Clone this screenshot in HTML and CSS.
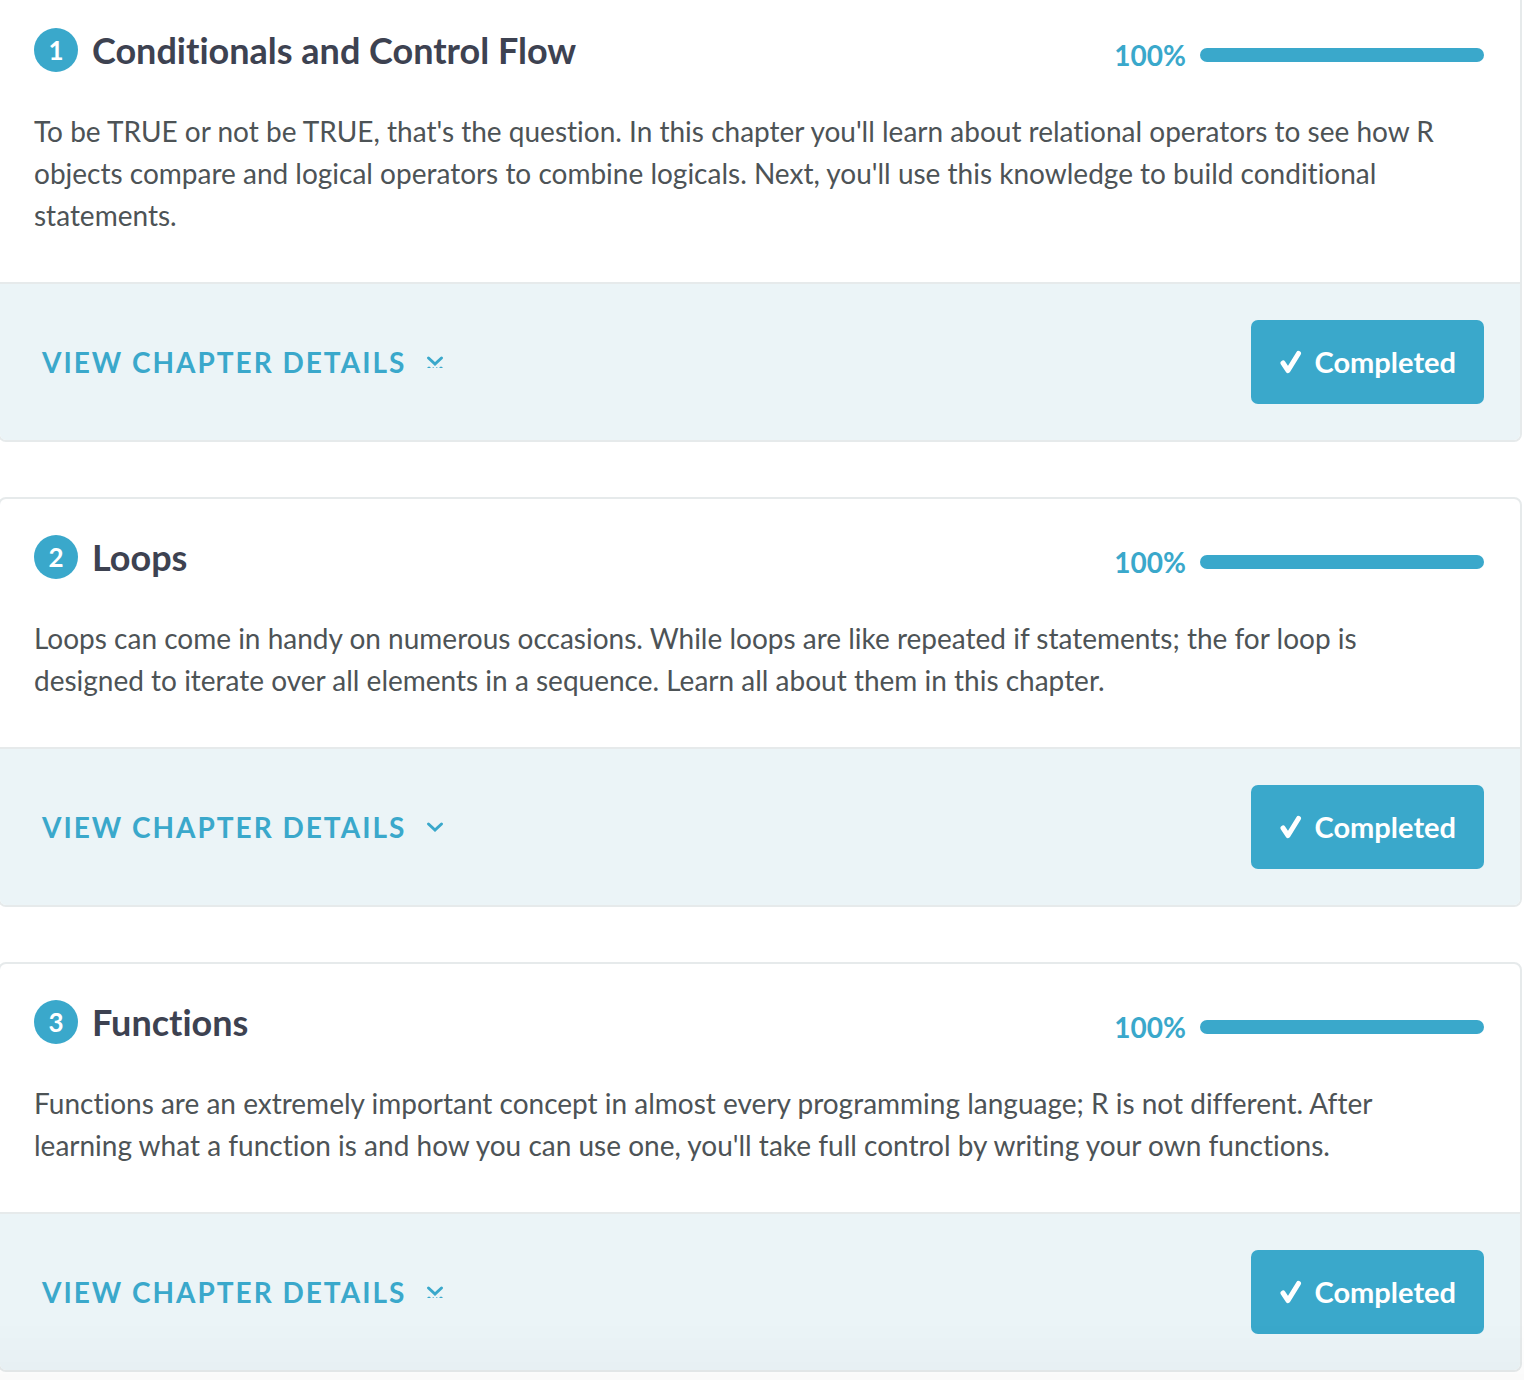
FILE: index.html
```html
<!DOCTYPE html>
<html lang="en">
<head>
  <meta charset="utf-8">
  <meta name="viewport" content="width=device-width, initial-scale=1">
  <title>Course chapters</title>
  <link rel="stylesheet" href="styles.css">
</head>
<body>
  <main class="chapters">
    <section class="chapter">
      <div class="chapter-body">
        <header class="chapter-header">
          <span class="chapter-number">1</span>
          <h2 class="chapter-title">Conditionals and Control Flow</h2>
          <div class="chapter-progress">
            <label class="progress-label" for="progress-1">100%</label>
            <progress class="progress-bar" id="progress-1" value="100" max="100"></progress>
          </div>
        </header>
        <p class="chapter-text">To be TRUE or not be TRUE, that's the question. In this chapter you'll learn about relational operators to see how R objects compare and logical operators to combine logicals. Next, you'll use this knowledge to build conditional statements.</p>
      </div>
      <footer class="chapter-footer">
        <button class="details-toggle" type="button">VIEW CHAPTER DETAILS
          <svg class="chevron" viewBox="0 0 18 14" aria-hidden="true"><path class="chevron-line" d="M2.500 3 9 9l6.500-6"/><path class="chevron-dots" d="M1 13q2-3 4 0zM6.500 13q.5-2 1.500 0zM10 13q1-2 1.500 0zM13 13q2-3 4 0z"/></svg>
        </button>
        <button class="completed" type="button">
          <svg class="check" viewBox="-1 0 24 24" aria-hidden="true"><path d="M3 13 8 20.500 18.500 3.500"/></svg>
          Completed
        </button>
      </footer>
    </section>

    <section class="chapter">
      <div class="chapter-body">
        <header class="chapter-header">
          <span class="chapter-number">2</span>
          <h2 class="chapter-title">Loops</h2>
          <div class="chapter-progress">
            <label class="progress-label" for="progress-2">100%</label>
            <progress class="progress-bar" id="progress-2" value="100" max="100"></progress>
          </div>
        </header>
        <p class="chapter-text">Loops can come in handy on numerous occasions. While loops are like repeated if statements; the for loop is designed to iterate over all elements in a sequence. Learn all about them in this chapter.</p>
      </div>
      <footer class="chapter-footer">
        <button class="details-toggle" type="button">VIEW CHAPTER DETAILS
          <svg class="chevron" viewBox="0 0 18 14" aria-hidden="true"><path class="chevron-line" d="M2.500 4 9 10l6.500-6"/></svg>
        </button>
        <button class="completed" type="button">
          <svg class="check" viewBox="-1 0 24 24" aria-hidden="true"><path d="M3 13 8 20.500 18.500 3.500"/></svg>
          Completed
        </button>
      </footer>
    </section>

    <section class="chapter">
      <div class="chapter-body">
        <header class="chapter-header">
          <span class="chapter-number">3</span>
          <h2 class="chapter-title">Functions</h2>
          <div class="chapter-progress">
            <label class="progress-label" for="progress-3">100%</label>
            <progress class="progress-bar" id="progress-3" value="100" max="100"></progress>
          </div>
        </header>
        <p class="chapter-text">Functions are an extremely important concept in almost every programming language; R is not different. After learning what a function is and how you can use one, you'll take full control by writing your own functions.</p>
      </div>
      <footer class="chapter-footer">
        <button class="details-toggle" type="button">VIEW CHAPTER DETAILS
          <svg class="chevron" viewBox="0 0 18 14" aria-hidden="true"><path class="chevron-line" d="M2.500 3 9 9l6.500-6"/><path class="chevron-dots" d="M1 13q2-3 4 0zM6.500 13q.5-2 1.500 0zM10 13q1-2 1.500 0zM13 13q2-3 4 0z"/></svg>
        </button>
        <button class="completed" type="button">
          <svg class="check" viewBox="-1 0 24 24" aria-hidden="true"><path d="M3 13 8 20.500 18.500 3.500"/></svg>
          Completed
        </button>
      </footer>
    </section>
  </main>
  <div class="bottom-shade"></div>
</body>
</html>
```

FILE: styles.css
```css
:root {
  --blue: #3aa8cb;
  --line: #e6eaeb;
  --tint: #ebf4f7;
}

* {
  box-sizing: border-box;
}

body {
  margin: 0;
  background: #fff;
  color: #4d5356;
  font: 28px/42px Lato, "Open Sans", sans-serif;
  font-variant-ligatures: none;
  overflow-x: hidden;
}

.chapters {
  display: flex;
  flex-direction: column;
  gap: 55px;
  margin: -10px 2px 8px -2px;
}

.chapter {
  border: 2px solid var(--line);
  border-radius: 8px;
  overflow: hidden;
}

.chapter-body {
  padding: 36px 36px 46px 34px;
}

.chapter-header {
  display: flex;
  align-items: center;
  margin-bottom: 38px;
}

.chapter-number {
  display: grid;
  place-items: center;
  width: 44px;
  height: 44px;
  margin-right: 14px;
  border-radius: 50%;
  background: var(--blue);
  color: #fff;
  font-size: 26px;
  font-weight: 700;
  line-height: 42px;
}

.chapter-title {
  flex: 1;
  margin: 0;
  color: #3d4251;
  font-size: 36px;
  font-weight: 700;
  line-height: 44px;
}

.chapter-progress {
  display: flex;
  align-items: center;
  gap: 14px;
  padding-top: 10px;
  color: var(--blue);
}

.progress-label {
  font-weight: 700;
  line-height: 34px;
}

.progress-bar {
  appearance: none;
  width: 284px;
  height: 14px;
  border: 0;
  border-radius: 7px;
  background: var(--line);
  overflow: hidden;
}

.progress-bar::-webkit-progress-bar {
  background: var(--line);
}

.progress-bar::-webkit-progress-value {
  background: var(--blue);
}

.progress-bar::-moz-progress-bar {
  background: var(--blue);
}

.chapter-text {
  margin: 0;
  padding-right: 28px;
}

.chapter-footer {
  display: flex;
  align-items: center;
  justify-content: space-between;
  padding: 36px 36px 36px 34px;
  border-top: 2px solid var(--line);
  background: var(--tint);
}

.details-toggle,
.completed {
  display: flex;
  align-items: center;
  border: 0;
  font: inherit;
  font-variant-ligatures: none;
  font-weight: 700;
  cursor: pointer;
}

.details-toggle {
  gap: 20px;
  padding: 0 8px;
  background: none;
  color: var(--blue);
  letter-spacing: 2px;
}

.chevron {
  width: 18px;
  height: 14px;
}

.chevron-line {
  fill: none;
  stroke: currentColor;
  stroke-width: 3;
  stroke-linecap: round;
}

.chevron-dots {
  fill: currentColor;
}

.completed {
  gap: 12px;
  height: 84px;
  padding: 0 28px;
  border-radius: 7px;
  background: var(--blue);
  color: #fff;
  font-size: 29px;
}

.check {
  width: 24px;
  height: 24px;
  fill: none;
  stroke: currentColor;
  stroke-width: 5;
  stroke-linecap: round;
  stroke-linejoin: round;
}

.bottom-shade {
  position: fixed;
  inset: auto 0 0;
  height: 60px;
  background: linear-gradient(rgba(0, 0, 0, 0), rgba(0, 0, 0, 0.02));
  pointer-events: none;
}
```
